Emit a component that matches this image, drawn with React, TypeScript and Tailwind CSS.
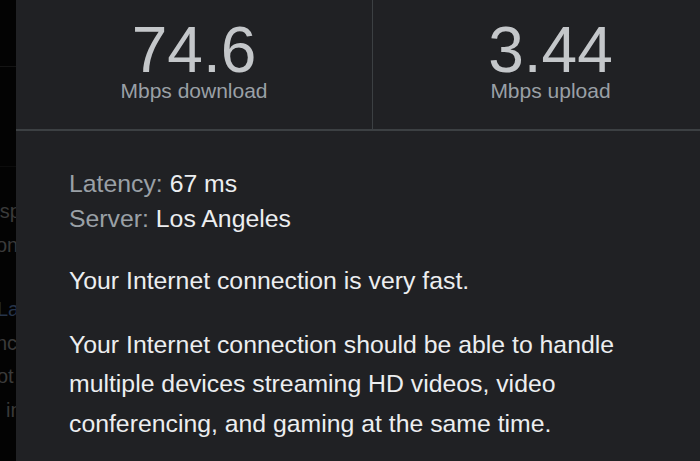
import React from "react";

const sans = { fontFamily: '"Liberation Sans", Arial, Helvetica, sans-serif' };

// Page content sitting behind the results sheet; only its right edge shows.
function BackdropEdge() {
  return (
    <div className="relative w-4 shrink-0 overflow-hidden bg-[#030303] text-[20px] leading-[33.5px] text-[#3a3a3a]">
      <div className="h-[67px] border-b border-[#141414]" />
      <div className="h-[100px] border-b border-[#0c0c0c]" />
      <div className="pt-[28px] whitespace-nowrap">
        <div className="-ml-[18px]">resp</div>
        <div className="-ml-[14px]">tion.</div>
        <div className="h-[31px]" />
        <div className="-ml-[3px] text-[#26344a]">La</div>
        <div className="-ml-[4px]">nc</div>
        <div className="-ml-[3px]">ot</div>
        <div className="ml-[6px]">in</div>
      </div>
    </div>
  );
}

function Stat({ value, label, divider }: { value: string; label: string; divider?: boolean }) {
  return (
    <div
      className={
        "flex flex-col items-center pt-[21px] pb-[26px] " +
        (divider ? "w-[357px] border-r border-[#3c4043]" : "flex-1")
      }
    >
      <div className="text-[64px] leading-[58px] text-[#c4c7ca]">{value}</div>
      <div className="text-[21px] leading-[24px] text-[#9aa0a6]">{label}</div>
    </div>
  );
}

export default function App() {
  return (
    <div className="flex h-[461px] w-[700px] overflow-hidden bg-[#030303]" style={sans}>
      <BackdropEdge />
      <div className="w-[712px] shrink-0 bg-[#202124]">
        <div className="flex border-b-2 border-[#3c4043]">
          <Stat value="74.6" label="Mbps download" divider />
          <Stat value="3.44" label="Mbps upload" />
        </div>
        <div className="pl-[53px] pt-[35px] text-[24.8px] text-[#eceef0]">
          <div className="leading-[35px]">
            <div>
              <span className="text-[#9aa0a6]">Latency:</span> 67 ms
            </div>
            <div>
              <span className="text-[#9aa0a6]">Server:</span> Los Angeles
            </div>
          </div>
          <p className="mt-[24.5px] leading-[40px]">Your Internet connection is very fast.</p>
          <p className="mt-[24px] w-[600px] leading-[39.5px]">
            Your Internet connection should be able to handle multiple devices streaming HD videos, video
            conferencing, and gaming at the same time.
          </p>
        </div>
      </div>
    </div>
  );
}
